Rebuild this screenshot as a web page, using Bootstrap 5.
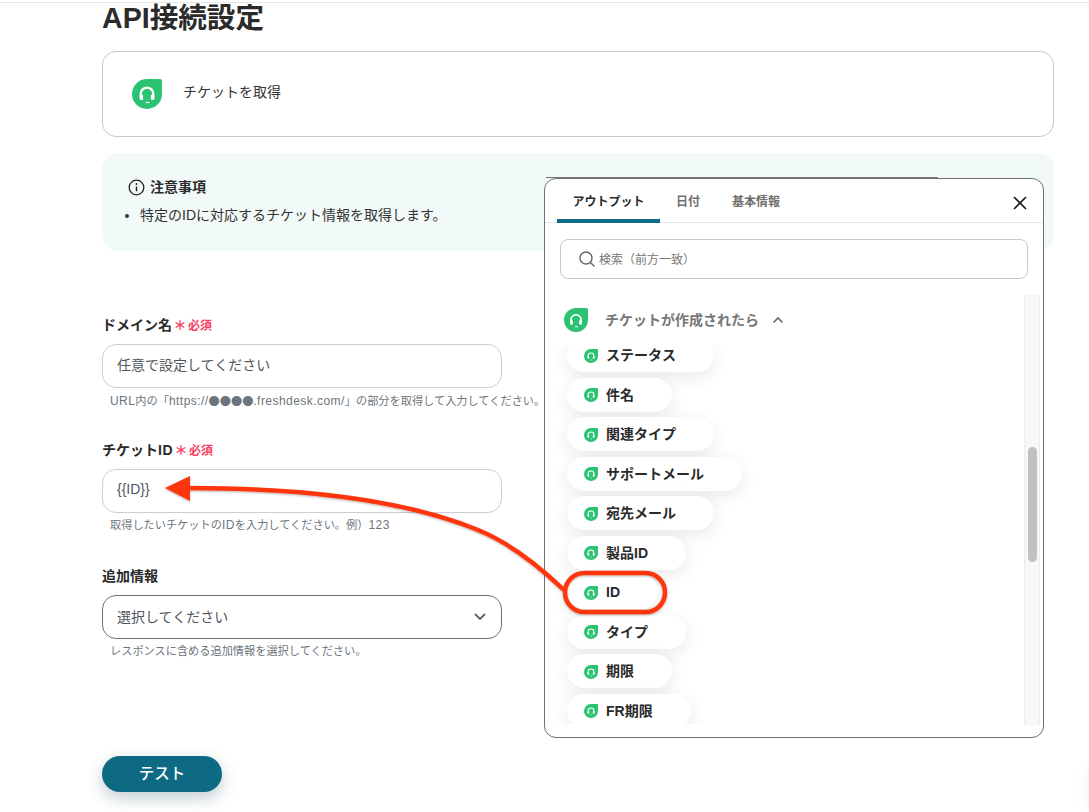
<!DOCTYPE html>
<html lang="ja">
<head>
<meta charset="utf-8">
<title>API接続設定</title>
<link rel="stylesheet" href="https://cdn.jsdelivr.net/npm/bootstrap@5.3.0/dist/css/bootstrap.min.css">
<style>
html,body{height:812px;overflow:hidden;background:#fff}
body{font-family:"Liberation Sans","Noto Sans CJK JP",sans-serif;color:#2a2a2a;position:relative}
.top-rule{height:3px;border-bottom:1px solid #e6e6e6}
.page-wrap{width:952px;margin-left:102px}
.page-title{font-size:28.6px;font-weight:700;line-height:30px;margin:0;color:#2b2b2b}
.action-box{height:86px;margin-top:18px;border:1px solid #c8c8c8;border-radius:14px;padding-left:29px;gap:21px;font-size:14px;color:#333}
.action-box span{margin-top:-3px}
.note-box{height:98px;margin-top:16px;background:#f2faf9;border-radius:16px;padding:25px 26px;font-size:14px}
.note-title{font-weight:700;gap:5px;line-height:18px;color:#2a2a2a}
.note-box ul{margin:10px 0 0;padding-left:12px;line-height:18px;color:#333}
.field-block{width:400px}
.field-label{font-size:14px;font-weight:700;height:20px;line-height:20px;margin:0 0 9px;color:#2a2a2a;white-space:nowrap}
.label-latin{letter-spacing:.5px}
.req-mark{color:#f6405f;font-size:12px;font-weight:700;margin-left:1.500px}
.req-mark b{font-size:13px;font-weight:700;margin-right:1.500px}
.field-input.form-control,.field-input.form-select{height:44px;border-radius:14px;border-color:#c9ced8;font-size:14px;color:#50565c;padding:4px 14px 8px}
.field-input.form-select{border-color:#6f6f6f;padding:6px 36px 6px 14px;background-image:url("data:image/svg+xml,%3csvg xmlns='http://www.w3.org/2000/svg' viewBox='0 0 12 8'%3e%3cpath fill='none' stroke='%23606060' stroke-width='1.800' stroke-linecap='round' d='M1.500 1.500L6 6l4.500-4.500'/%3e%3c/svg%3e");background-position:right 15px center;background-size:12px 8px}
.field-help{font-size:11.200px;height:14px;line-height:14px;margin:5px 0 0 8px;color:#6c757d;white-space:nowrap}
.help-latin{font-size:12px;letter-spacing:.45px}
.help-dots{font-family:"Noto Sans CJK JP",sans-serif}
.test-btn.btn{width:120px;height:36px;border-radius:18px;background:#0d6a82;border:0;color:#fff;font-size:15.500px;font-weight:500;box-shadow:0 6px 16px rgba(13,60,80,.25);padding:0}
.out-panel{position:absolute;left:544px;top:178px;width:500px;height:560px;background:#fff;border:1px solid #6e6e6e;border-radius:12px;z-index:2;overflow:hidden}
.under-edge{position:absolute;left:546px;top:177px;width:392px;height:1px;background:#777;z-index:1}
.tab-row{height:44px;border-bottom:1px solid #e6e6e6;padding-left:12px;position:relative}
.tab-item{padding:0 16px;height:44px;line-height:47px;font-size:12px;font-weight:700;color:#6f6f6f;white-space:nowrap}
.tab-item.is-on{width:103px;text-align:center;padding:0;color:#2a2a2a;border-bottom:4px solid #0b6a85;border-radius:4px 4px 0 0}
.close-x{position:absolute;right:15px;top:16px;line-height:0}
.search-box{margin:16px 15px 0;height:40px;border:1px solid #c8c8c8;border-radius:8px;padding-left:17px;gap:3px;font-size:12px;color:#777}
.search-box span{padding-top:1px}
.list-area{height:430px;margin-top:16px;position:relative}
.sec-head{height:50px;padding-left:19px;gap:17px;font-size:14px;font-weight:700;color:#777}
.sec-chev{margin-left:-4px}
.pill-clip{height:379px;overflow:hidden;padding:0 0 20px 22px;margin-right:16px}
.pill-col{margin-top:-7px;gap:5.550px;align-items:flex-start}
.pill-item{height:34px;border-radius:17px;background:#fff;padding:1px 38px 0 17px;gap:8px;font-size:14px;font-weight:700;color:#2a2a2a;box-shadow:0 5px 18px rgba(0,0,0,.09);white-space:nowrap}
.scroll-track{position:absolute;right:3px;top:0;bottom:0;width:16px;background:#f8f8f8;border-left:1px solid #ececec;border-right:1px solid #ececec}
.scroll-thumb{position:absolute;left:3px;top:152px;width:9px;height:115px;border-radius:5px;background:#c1c1c1}
.arrow-layer{position:absolute;left:0;top:0;z-index:3;pointer-events:none}
.corner-glow{position:absolute;left:1095px;top:768px;width:40px;height:40px;border-radius:50%;box-shadow:0 0 24px rgba(0,0,0,.14)}
</style>
</head>
<body>
<svg width="0" height="0" class="position-absolute">
  <symbol id="fd" viewBox="0 0 24 24">
    <path d="M12 0H22.500A1.500 1.500 0 0 1 24 1.500V12A12 12 0 1 1 12 0Z" fill="#2ac371"/>
    <path d="M7 15V11.800A5 5 0 0 1 17 11.800V15" fill="none" stroke="#fff" stroke-width="1.800"/>
    <rect x="6.100" y="12.300" width="2.800" height="4.400" rx="1" fill="#fff"/>
    <rect x="15.100" y="12.300" width="2.800" height="4.400" rx="1" fill="#fff"/>
    <path d="M11 18.800H14" stroke="#fff" stroke-width="1"/>
  </symbol>
</svg>

<div class="top-rule"></div>
<main class="page-wrap">
  <h1 class="page-title">API接続設定</h1>
  <div class="action-box d-flex align-items-center">
    <svg width="30" height="30"><use href="#fd"/></svg>
    <span>チケットを取得</span>
  </div>
  <div class="note-box">
    <div class="note-title d-flex align-items-center">
      <svg width="17" height="17" viewBox="0 0 17 17" fill="none" stroke="#222"><circle cx="8.500" cy="8.500" r="7.300" stroke-width="1.300"/><path d="M8.500 7.500V12.300" stroke-width="1.500"/><circle cx="8.500" cy="5" r=".9" fill="#222" stroke="none"/></svg>
      <span>注意事項</span>
    </div>
    <ul><li>特定のIDに対応するチケット情報を取得します。</li></ul>
  </div>

  <div class="field-block" style="margin-top:64px">
    <p class="field-label">ドメイン名<span class="req-mark"><b>＊</b>必須</span></p>
    <input class="form-control field-input" type="text" value="任意で設定してください">
    <p class="field-help"><span class="help-latin">URL</span>内の「<span class="help-latin">https://</span><span class="help-dots">●●●●</span><span class="help-latin">.freshdesk.com/</span>」の部分を取得して入力してください。</p>
  </div>
  <div class="field-block" style="margin-top:33px">
    <p class="field-label">チケット<span class="label-latin">ID</span><span class="req-mark"><b>＊</b>必須</span></p>
    <input class="form-control field-input" type="text" value="{{ID}}">
    <p class="field-help">取得したいチケットの<span class="help-latin">ID</span>を入力してください。例）<span class="help-latin">123</span></p>
  </div>
  <div class="field-block" style="margin-top:34px">
    <p class="field-label">追加情報</p>
    <select class="form-select field-input"><option>選択してください</option></select>
    <p class="field-help">レスポンスに含める追加情報を選択してください。</p>
  </div>
  <button class="btn test-btn" type="button" style="margin-top:98px">テスト</button>
</main>

<div class="under-edge"></div>
<aside class="out-panel">
  <div class="tab-row d-flex">
    <div class="tab-item is-on">アウトプット</div>
    <div class="tab-item">日付</div>
    <div class="tab-item">基本情報</div>
    <div class="close-x"><svg width="16" height="16" viewBox="0 0 16 16" stroke="#1a1a1a" stroke-width="1.700"><path d="M2 2L14 14M14 2L2 14"/></svg></div>
  </div>
  <div class="search-box d-flex align-items-center">
    <svg width="18" height="18" viewBox="0 0 18 18" fill="none" stroke="#666" stroke-width="1.400"><circle cx="8" cy="8" r="6"/><path d="M12.500 12.500L16.500 16.500"/></svg>
    <span>検索（前方一致）</span>
  </div>
  <div class="list-area">
    <div class="sec-head d-flex align-items-center">
      <svg width="24" height="24"><use href="#fd"/></svg>
      <span>チケットが作成されたら</span>
      <svg width="12" height="8" viewBox="0 0 12 8" fill="none" stroke="#666" stroke-width="1.600" class="sec-chev"><path d="M1.500 6.500L6 2L10.500 6.500"/></svg>
    </div>
    <div class="pill-clip">
      <div class="pill-col d-flex flex-column">
        <div class="pill-item d-flex align-items-center"><svg width="14" height="14"><use href="#fd"/></svg>ステータス</div>
        <div class="pill-item d-flex align-items-center"><svg width="14" height="14"><use href="#fd"/></svg>件名</div>
        <div class="pill-item d-flex align-items-center"><svg width="14" height="14"><use href="#fd"/></svg>関連タイプ</div>
        <div class="pill-item d-flex align-items-center"><svg width="14" height="14"><use href="#fd"/></svg>サポートメール</div>
        <div class="pill-item d-flex align-items-center"><svg width="14" height="14"><use href="#fd"/></svg>宛先メール</div>
        <div class="pill-item d-flex align-items-center"><svg width="14" height="14"><use href="#fd"/></svg>製品ID</div>
        <div class="pill-item d-flex align-items-center"><svg width="14" height="14"><use href="#fd"/></svg>ID</div>
        <div class="pill-item d-flex align-items-center"><svg width="14" height="14"><use href="#fd"/></svg>タイプ</div>
        <div class="pill-item d-flex align-items-center"><svg width="14" height="14"><use href="#fd"/></svg>期限</div>
        <div class="pill-item d-flex align-items-center"><svg width="14" height="14"><use href="#fd"/></svg>FR期限</div>
      </div>
    </div>
    <div class="scroll-track"><div class="scroll-thumb"></div></div>
  </div>
</aside>

<svg class="arrow-layer" width="1089" height="812" viewBox="0 0 1089 812" fill="none">
  <defs><filter id="sh" x="-5%" y="-5%" width="110%" height="110%"><feDropShadow dx="0" dy="1" stdDeviation="1" flood-color="#000" flood-opacity=".3"/></filter></defs>
  <g filter="url(#sh)">
    <path d="M188 488C290 488 400 498 478 530C510 543 540 567 564 590" stroke="#ff3508" stroke-width="4.500"/>
    <path d="M165 488L190 476V501Z" fill="#ff3508"/>
    <rect x="565" y="573" width="100" height="39" rx="19.500" stroke="#ff3508" stroke-width="4.500"/>
  </g>
</svg>
<div class="corner-glow"></div>
<script src="https://cdn.jsdelivr.net/npm/bootstrap@5.3.0/dist/js/bootstrap.bundle.min.js"></script>
</body>
</html>
